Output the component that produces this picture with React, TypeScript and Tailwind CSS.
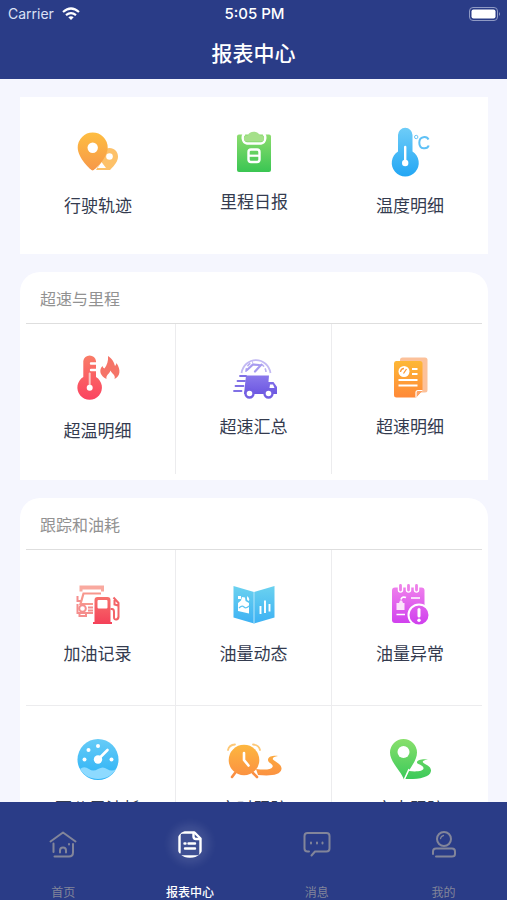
import type { FC, ReactNode } from "react";

type IconProps = { tall?: boolean; from: string; to: string; id: string; children: ReactNode };

const Icon: FC<IconProps> = ({ tall, from, to, id, children }) => (
  <svg
    className="overflow-visible"
    width={48}
    height={tall ? 50 : 42}
    viewBox={tall ? "0 0 48 50" : "0 0 48 42"}
    fill="none"
    aria-hidden="true"
  >
    <defs>
      <linearGradient id={id} x1="0" y1="0" x2="0" y2={tall ? 50 : 42} gradientUnits="userSpaceOnUse">
        <stop offset="0" stopColor={from} />
        <stop offset="1" stopColor={to} />
      </linearGradient>
    </defs>
    {children}
  </svg>
);

const TrackIcon = () => (
  <Icon tall id="track" from="#ffc341" to="#f59149">
    <path d="M22 43 L27 34 C27 25 30 21 35.5 21 C40.500 21 44 25 44 29.500 C44 34 41 38 36.500 42.500 Q36 43 35 43 Z" fill="#fdc169" />
    <path d="M23.500 41 L27.500 35 L32 41 Z" fill="#fff" />
    <circle cx="35.500" cy="29.500" r="3.300" fill="#fff" />
    <path d="M18.700 43.500 C17 43.500 3.700 31 3.700 20.500 A15 15 0 0 1 33.700 20.500 C33.700 31 20.400 43.500 18.700 43.500 Z" fill="url(#track)" />
    <circle cx="18.700" cy="20.700" r="5.200" fill="#fff" />
  </Icon>
);

const MileageIcon = () => (
  <Icon id="mileage" from="#93de70" to="#38c552">
    <rect x="7" y="3.500" width="34" height="37.500" rx="2" fill="url(#mileage)" />
    <path d="M15 3 C11.500 4 12 12 17 12.500 H31 C36 12 36.500 4 33 3" stroke="#fff" strokeWidth="2.400" />
    <path d="M17 10.500 C12.500 10.500 13 4 18 4.500 C19 -0.500 28 -0.500 30 4.500 C35 4 35.500 10.500 31 10.500 Z" fill="#a5e08a" />
    <rect x="18.500" y="18.500" width="11" height="12.500" rx="2.500" stroke="#fff" strokeWidth="2.400" />
    <path d="M19 24.700 H29" stroke="#fff" strokeWidth="2.200" />
  </Icon>
);

const TemperatureIcon = () => (
  <Icon tall id="temp" from="#6fcdf8" to="#22a6f4">
    <path d="M12 8 A7.200 7.200 0 0 1 26.500 8 V24.500 A13.500 13.500 0 1 1 12 24.500 Z" fill="url(#temp)" />
    <path d="M19.200 20 V35" stroke="#fff" strokeWidth="2.400" strokeLinecap="round" />
    <circle cx="19.200" cy="36" r="3.200" fill="#fff" />
    <circle cx="30.200" cy="10" r="1.700" stroke="#6cc5f5" />
    <path d="M42.500 12.500 C41 9.200 33.300 8.500 33.300 15.700 C33.300 23 41.500 22.300 42.700 18.500" stroke="#5fc1f6" strokeWidth="2" />
  </Icon>
);

const OverheatIcon = () => (
  <Icon tall id="overheat" from="#f98168" to="#fb4060">
    <path d="M9.300 9 A6.400 6.400 0 0 1 22 9 V25 A12.300 12.300 0 1 1 9.300 25 Z" fill="url(#overheat)" />
    <path d="M23 11.500 H17 M23 18 H17" stroke="#fff" strokeWidth="2.400" strokeLinecap="round" />
    <path d="M15.700 21.500 V35" stroke="#fbc6c2" strokeWidth="2" strokeLinecap="round" />
    <circle cx="15.700" cy="35.700" r="3" fill="#fff" />
    <path d="M34 4 C39 7 40 11 41 14 C42 13 42.300 12 42.500 11 C47 18 46.500 24 40.500 27 C42 23 38 22 36.500 18.500 C35.500 22 31.500 23 32.500 27 C26 24 24.500 18 28.500 14 C29 15.500 29.500 16 30.500 16.500 C33 13 34.500 9 34 4 Z" fill="#f57468" />
  </Icon>
);

const SpeedTruckIcon = () => (
  <Icon id="truck" from="#a99cf5" to="#6650e0">
    <path d="M11.500 17 A14.700 15.500 0 0 1 40.500 17" stroke="#c2b9f3" strokeWidth="1.800" />
    <path d="M16 16 A10 10 0 0 1 23 6 M31 8 A10 10 0 0 1 36 16" stroke="#b9aff2" strokeWidth="1.600" strokeDasharray="4 2" />
    <path d="M17 14 L23 8.500 L29 9 M25 15.500 L31 9" stroke="#a79bf0" strokeWidth="2.200" strokeLinecap="round" />
    <path d="M16 19.500 H39 L37.500 38 H14 Z" fill="url(#truck)" />
    <path d="M38 26 H43.500 L47 31 V38 H36 Z" fill="url(#truck)" />
    <path d="M40 28.500 H43 L44.500 32 H39.500 Z" fill="#fff" />
    <circle cx="19.500" cy="37.500" r="4" fill="#fff" stroke="#735fe2" strokeWidth="2.400" />
    <circle cx="38.500" cy="37.500" r="4" fill="#fff" stroke="#735fe2" strokeWidth="2.400" />
    <path d="M10 20 H16 M7.500 25 H15 M5.500 30 H13.500 M4 35 H11.500" stroke="#8070e5" strokeWidth="1.800" strokeLinecap="round" />
  </Icon>
);

const SpeedDetailIcon = () => (
  <Icon id="detail" from="#fdbe35" to="#ff8838">
    <rect x="14" y="1.500" width="27.500" height="35" rx="2.500" fill="#fcc19a" />
    <path d="M10 5 H34 Q36.500 5 36.500 7.500 V34.500 L30 41.500 H10.500 Q8 41.500 8 39 V7.500 Q8 5 10 5 Z" fill="url(#detail)" />
    <path d="M36.500 34.500 H32 Q30 34.500 30 36.500 V41.500" fill="#fda467" stroke="#fff" strokeWidth="1.200" />
    <circle cx="18" cy="15.500" r="5.500" fill="#fff" />
    <path d="M17.500 17.500 L20.500 13 M14.500 16 Q15 12.500 18 12.500" stroke="#fb9c3c" strokeWidth="1.300" />
    <path d="M26 13 H31.500 M26 18 H31.500 M12.500 24 H31.500 M12.500 29.500 H31.500" stroke="#fff" strokeWidth="1.800" />
  </Icon>
);

const RefuelIcon = () => (
  <Icon id="refuel" from="#f98a76" to="#f43f58">
    <path d="M5.500 2.500 H30 V8.500 H27 V6.500 H8.500 V8.500 H5.500 Z" fill="#f9a99f" />
    <path d="M27 10.500 H9.500 L6.500 21 H19" stroke="#f7978d" strokeWidth="2.200" />
    <path d="M3.500 13 V18 H7 M3.500 21 V30 H19 M5.500 30 V33 H12 V31 M14 24.500 H19 M14 27.500 H19" stroke="#f58e8d" strokeWidth="2" />
    <circle cx="8.500" cy="25.500" r="3.300" fill="#fff" stroke="#f58e8d" strokeWidth="2" />
    <path d="M20.500 39 V17 Q20.500 14 23.500 14 H33.500 Q36.500 14 36.500 17 V39 H38 V41 H19 V39 Z" fill="url(#refuel)" />
    <rect x="23.500" y="17" width="10" height="8.500" rx="1" fill="#fff" />
    <path d="M36.500 26 H38 Q40 26 40 29 V34 Q40 37 42.500 36.500 Q45 36 44.500 32 V20 L39.500 14.500 M40.500 17 V21.500 L44 22.500" stroke="#f36468" strokeWidth="2" />
  </Icon>
);

const FuelTrendIcon = () => (
  <Icon id="trend" from="#6ed4ef" to="#3bb0f4">
    <path d="M3.500 3 L24 9 V40.500 L3.500 34.500 Z" fill="url(#trend)" />
    <path d="M44.500 3 L24 9 V40.500 L44.500 34.500 Z" fill="url(#trend)" />
    <path d="M24 9 V40.500" stroke="#b4e5fa" />
    <path d="M8 20 L11 17.500 L12 14 L15 14.500 L15.500 18 L19 20 V30.500 L8 28 Z" fill="#fff" />
    <path d="M9 25 Q12 22 14 24 T19 23" stroke="#62c6f2" strokeWidth="1.200" />
    <path d="M17.500 13 Q20.500 17 18.500 18 Q16 17 17.500 13 Z M8 13 H11 V16 H8 Z" fill="#fff" />
    <path d="M30.500 23 V31 M35 17.500 V30 M39.500 21 V28.500" stroke="#fff" strokeWidth="1.900" />
  </Icon>
);

const FuelAlertIcon = () => (
  <Icon id="alert" from="#f286ec" to="#cf3eee">
    <rect x="6" y="4.500" width="32.500" height="35.500" rx="3" fill="url(#alert)" />
    <path d="M14.500 3 V7 M22.500 3 V7 M30.500 3 V7" stroke="#fff" strokeWidth="5.500" strokeLinecap="round" />
    <path d="M14.500 2.500 V7 M22.500 2.500 V7 M30.500 2.500 V7" stroke="#ee7fe9" strokeWidth="2.800" strokeLinecap="round" />
    <path d="M10.500 20 H13 L14 17.500 H16 L17 20 H18.500 V27 H10.500 Z" fill="#fce3fb" />
    <path d="M15 16.500 Q16 13 20 14.500 M25 15 H34 M10.500 31.500 H19" stroke="#fff" strokeWidth="1.700" />
    <circle cx="33" cy="32" r="10.500" fill="url(#alert)" stroke="#fff" strokeWidth="2" />
    <path d="M33 26.500 V33" stroke="#fff" strokeWidth="3" strokeLinecap="round" />
    <circle cx="33" cy="37.300" r="1.700" fill="#fff" />
  </Icon>
);

const ConsumptionIcon = () => (
  <Icon id="consumption" from="#68ccf7" to="#2bb2f6">
    <circle cx="24" cy="21.500" r="20.500" fill="url(#consumption)" />
    <path d="M6 31 Q10 27.500 15 31 Q19 34 24 31 Q29 28 33 31 Q38 34 42 31 C38 37.500 32 41 24 41 C16 41 10 37.500 6 31 Z" fill="#8ddaff" />
    <path d="M24 21.500 L33.500 12" stroke="#fff" strokeWidth="2.600" strokeLinecap="round" />
    <circle cx="24" cy="21.500" r="4.200" fill="#fff" />
    <circle cx="10.500" cy="21.500" r="2" fill="#fff" />
    <circle cx="14.500" cy="12" r="2" fill="#fff" />
    <circle cx="24" cy="8" r="2" fill="#fff" />
    <circle cx="37.500" cy="21.500" r="2" fill="#fff" />
  </Icon>
);

const TimedIcon = () => (
  <Icon id="timed" from="#fdbf3f" to="#fb8c41">
    <path d="M26 31 C34 32 41 32 42.500 29 C44 26 37.500 25 38 21.500 C38.500 18 44 17.500 48 18 C44.500 18.500 42 19.500 43 21.500 C45 24 52 26 51.500 31 C50.500 37.500 40 38 28 37 Z" fill="url(#timed)" />
    <path d="M5 35 L2 39 M23 35 L27 39" stroke="#fa8f43" strokeWidth="2.600" strokeLinecap="round" />
    <circle cx="14" cy="22" r="15.300" fill="url(#timed)" />
    <path d="M-2 12 Q-1 7 5 6.500 M30 12 Q29 7 23 6.500" stroke="#fdc877" strokeWidth="1.800" strokeLinecap="round" />
    <path d="M14 15 V22 L18.500 27.500" stroke="#fff" strokeWidth="2.600" strokeLinecap="round" strokeLinejoin="round" />
  </Icon>
);

const PointIcon = () => (
  <Icon id="point" from="#8ae06c" to="#3ac95a">
    <path d="M23 33 C31 34 37 33 37.500 30.500 C38 27 31 26.500 31 24.500 C31 21.500 37 21 42 21.500 C38 22 36 23 37 24.500 C39 26.500 45.500 28 45 33 C44 40 31 41.500 19 41 Z" fill="url(#point)" />
    <path d="M18 41.500 C15 33 4 24 4 14.500 A13.500 13.500 0 0 1 31 14.500 C31 24 21 33 18 41.500 Z" fill="url(#point)" />
    <path d="M18.500 41 L23 31" stroke="#fff" strokeWidth="1.400" />
    <circle cx="17.500" cy="14" r="6" fill="#fff" />
  </Icon>
);

type Item = { name: string; icon: ReactNode };

const overview: Item[] = [
  { name: "行驶轨迹", icon: <TrackIcon /> },
  { name: "里程日报", icon: <MileageIcon /> },
  { name: "温度明细", icon: <TemperatureIcon /> },
];

const sections: { title: string; rows: Item[][] }[] = [
  {
    title: "超速与里程",
    rows: [
      [
        { name: "超温明细", icon: <OverheatIcon /> },
        { name: "超速汇总", icon: <SpeedTruckIcon /> },
        { name: "超速明细", icon: <SpeedDetailIcon /> },
      ],
    ],
  },
  {
    title: "跟踪和油耗",
    rows: [
      [
        { name: "加油记录", icon: <RefuelIcon /> },
        { name: "油量动态", icon: <FuelTrendIcon /> },
        { name: "油量异常", icon: <FuelAlertIcon /> },
      ],
      [
        { name: "百公里油耗", icon: <ConsumptionIcon /> },
        { name: "定时跟踪", icon: <TimedIcon /> },
        { name: "定点跟踪", icon: <PointIcon /> },
      ],
    ],
  },
];

const tabs = [
  {
    name: "首页",
    icon: <path d="M1.500 11.500 L14 2.500 L26.500 11.500 M4.500 13.500 V22 M5.500 26.500 H20 Q24 26.500 24 22.500 V14 M11 22.500 V20.500 Q11 17.500 14 17.500 Q17 17.500 17 20.500 V22.500 M20 14 V14.500" />,
  },
  {
    name: "报表中心",
    active: true,
    icon: (
      <>
        <path d="M3.500 22.500 V5.500 Q3.500 2.500 6.500 2.500 H18.500 L24.500 8.500 V23.500 Q24.500 26.500 21.500 26.500 H5.500" />
        <path d="M17.500 3 V6.500 Q17.500 9 20 9 H24 M8.500 13.500 H9.500 M12.500 13.500 H19 M9 18.500 H19" />
      </>
    ),
  },
  {
    name: "消息",
    icon: <path d="M6 21.500 H4.500 Q1.500 21.500 1.500 18.500 V6 Q1.500 3 4.500 3 H23.500 Q26.500 3 26.500 6 V18.500 Q26.500 21.500 23.500 21.500 H12 L8.500 25.500 M8 12.500 V13.500 M14 12.500 V13.500 M19.500 12.500 V13.500" />,
  },
  {
    name: "我的",
    icon: (
      <>
        <circle cx="14" cy="9" r="7" />
        <path d="M10.500 8.500 Q11 6 13.500 5.500" strokeWidth="1.300" />
        <path d="M3 24 V21.500 Q3 18.500 6 18.500 H22 Q25 18.500 25 21.500 V24 Q25 26.500 22 26.500 H6" />
      </>
    ),
  },
];

const ReportItem: FC<Item> = ({ name, icon }) => (
  <button type="button" className="flex w-full h-full flex-col items-center justify-center gap-4">
    {icon}
    <span className="text-[17px] leading-6 text-[#343b4f]">{name}</span>
  </button>
);

const Header = () => (
  <header className="shrink-0 bg-[#2a3c87] text-white">
    <div className="grid h-7 grid-cols-3 items-center pr-1.5 pl-2 font-['Inter','Liberation_Sans',sans-serif]">
      <div className="flex items-center gap-2 text-sm text-[#dce1f5]">
        Carrier
        <svg width="18" height="14" viewBox="0 0 18 14" fill="none" stroke="#fff" strokeWidth="2.200" aria-hidden="true">
          <path d="M1 5 Q9 -2 17 5 M4 8.200 Q9 4 14 8.200" />
          <path d="M6.300 10.300 Q9 8.300 11.700 10.300 L9 13 Z" fill="#fff" stroke="none" />
        </svg>
      </div>
      <div className="text-center text-[15px] font-medium">5:05 PM</div>
      <svg className="justify-self-end" width="32" height="14" viewBox="0 0 32 14" aria-hidden="true">
        <rect x="0.500" y="0.500" width="28" height="13" rx="3.500" fill="none" stroke="#8f9ac4" />
        <rect x="2.500" y="2.500" width="24" height="9" rx="2" fill="#fff" />
        <path d="M30 5 Q32 7 30 9 Z" fill="#8f9ac4" />
      </svg>
    </div>
    <h1 className="h-[51px] pt-2 text-center text-[21px] leading-8 font-medium">报表中心</h1>
  </header>
);

const Divider = ({ className }: { className: string }) => <div className={`mx-1.5 h-px ${className}`} />;

const App: FC = () => {
  return (
    <div className="flex h-screen flex-col bg-[#f5f6fe] font-['Noto_Sans_CJK_SC',sans-serif]">
      <Header />

      <main className="flex min-h-0 flex-1 flex-col gap-[18px] overflow-y-auto pt-[18px] pr-[19px] pl-5 [scrollbar-width:none]">
        <section className="grid shrink-0 grid-cols-3 bg-white">
          {overview.map((item) => (
            <div key={item.name} className="h-[157px] pb-2">
              <ReportItem {...item} />
            </div>
          ))}
        </section>

        {sections.map((section) => (
          <section key={section.title} className="shrink-0 rounded-t-[20px] bg-white">
            <h2 className="px-5 pt-[14px] pb-[13px] text-base leading-6 text-[#929292]">{section.title}</h2>
            <Divider className="bg-[#dedede]" />
            {section.rows.map((row, index) => {
              const last = index === section.rows.length - 1;
              return (
                <div key={index}>
                  {index > 0 && <Divider className="bg-[#ececee]" />}
                  <div className={last ? "grid grid-cols-3 pb-1.5" : "grid grid-cols-3"}>
                    {row.map((item) => (
                      <div
                        key={item.name}
                        className={`border-[#ececee] not-last:border-r ${last ? "h-[150px] pb-1" : "h-[155px] pb-2"}`}
                      >
                        <ReportItem {...item} />
                      </div>
                    ))}
                  </div>
                </div>
              );
            })}
          </section>
        ))}
      </main>

      <nav className="grid h-[98px] shrink-0 grid-cols-4 bg-[#2a3c87]">
        {tabs.map((tab) => (
          <a
            key={tab.name}
            href="#"
            className={`flex flex-col items-center gap-6 pt-7 ${tab.active ? "font-medium text-white" : "text-[#82859a]"}`}
          >
            <svg
              className={tab.active ? "rounded-full bg-white/10 shadow-[0_0_8px_6px_rgba(255,255,255,0.1)]" : ""}
              width="28"
              height="28"
              viewBox="0 0 28 28"
              fill="none"
              stroke="currentColor"
              strokeWidth={tab.active ? 2.4 : 2}
              strokeLinecap="round"
              strokeLinejoin="round"
              aria-hidden="true"
            >
              {tab.icon}
            </svg>
            <span className="text-xs leading-5">{tab.name}</span>
          </a>
        ))}
      </nav>
    </div>
  );
};

export default App;
